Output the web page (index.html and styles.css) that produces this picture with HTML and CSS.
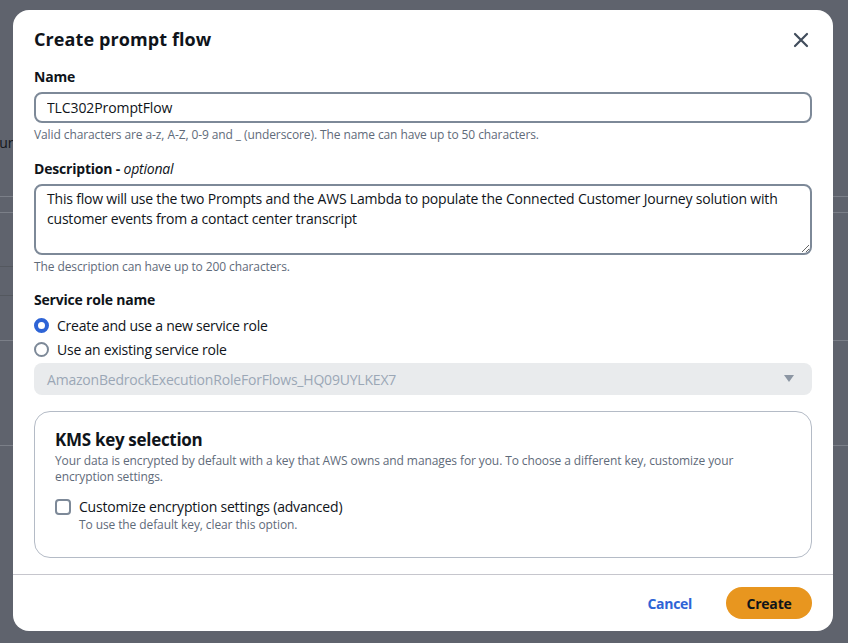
FILE: index.html
```html
<!DOCTYPE html>
<html>
<head>
<meta charset="utf-8">
<link rel="stylesheet" href="styles.css">
</head>
<body>
<div class="backdrop">
  <div class="bg-text">Your</div>
  <div class="bg-row bg-r1"></div>
  <div class="bg-row bg-r2"></div>
  <div class="bg-row bg-r3 bg-short"></div>
  <div class="bg-row bg-r4 bg-short"></div>
  <div class="bg-row bg-r5"></div>
  <div class="bg-row bg-r6"></div>
</div>
<div class="modal">
  <div class="modal-header">
    <h2 class="modal-title">Create prompt flow</h2>
    <button class="close" aria-label="Close">
      <svg width="16" height="16" viewBox="0 0 16 16"><path d="M2 2 L14 14 M14 2 L2 14" stroke="#414d5c" stroke-width="2.2" fill="none" stroke-linecap="round"/></svg>
    </button>
  </div>
  <div class="modal-body">
    <div class="field">
      <label class="label">Name</label>
      <input class="input" type="text" value="TLC302PromptFlow">
      <div class="hint">Valid characters are a-z, A-Z, 0-9 and _ (underscore). The name can have up to 50 characters.</div>
    </div>
    <div class="field field-gap">
      <label class="label">Description - <i class="optional">optional</i></label>
      <textarea class="textarea">This flow will use the two Prompts and the AWS Lambda to populate the Connected Customer Journey solution with customer events from a contact center transcript</textarea>
      <div class="hint hint-ta">The description can have up to 200 characters.</div>
    </div>
    <div class="field field-gap2">
      <label class="label">Service role name</label>
      <div class="radios">
        <div class="radio-row"><span class="radio radio-on"></span><span>Create and use a new service role</span></div>
        <div class="radio-row"><span class="radio"></span><span>Use an existing service role</span></div>
      </div>
      <div class="select">
        <span>AmazonBedrockExecutionRoleForFlows_HQ09UYLKEX7</span>
        <svg width="12" height="10" viewBox="0 0 12 10"><path d="M1 1 H11 L6 8 Z" fill="#8c96a3"/></svg>
      </div>
    </div>
    <div class="kms">
      <h3 class="kms-title">KMS key selection</h3>
      <p class="kms-desc">Your data is encrypted by default with a key that AWS owns and manages for you. To choose a different key, customize your<br>encryption settings.</p>
      <div class="check-row">
        <span class="checkbox"></span>
        <div>
          <div class="check-label">Customize encryption settings (advanced)</div>
          <div class="check-hint">To use the default key, clear this option.</div>
        </div>
      </div>
    </div>
  </div>
  <div class="modal-footer">
    <a class="cancel">Cancel</a>
    <button class="create">Create</button>
  </div>
</div>
</body>
</html>
```
FILE: styles.css
```css
* { box-sizing: border-box; }
html, body { margin: 0; padding: 0; }
body {
  width: 848px;
  height: 643px;
  overflow: hidden;
  background: #5f636d;
  font-family: "Open Sans", "Noto Sans", sans-serif;
  color: #0f141a;
  position: relative;
}
.backdrop { position: relative; height: 643px; }
.bg-text {
  position: absolute; left: -17px; top: 133px;
  font-size: 14px; color: #14171c;
}
.bg-row { position: absolute; left: 0; right: 0; height: 1px; background: #7b7f88; }
.bg-short { right: auto; width: 13px; }
.bg-r1 { top: 196px; }
.bg-r2 { top: 212px; }
.bg-r3 { top: 266px; background: #54585f; }
.bg-r4 { top: 295px; background: #54585f; }
.bg-r5 { top: 340px; }
.bg-r6 { top: 445px; }

.modal {
  position: absolute;
  left: 13px; top: 10px;
  width: 820px; height: 621px;
  background: #fff;
  border-radius: 16px;
  display: flex; flex-direction: column;
}
.modal-header {
  display: flex; align-items: center; justify-content: space-between;
  padding: 18px 24px 0 21px;
}
.modal-title {
  margin: 0; font-size: 18px; line-height: 22px; font-weight: 700; letter-spacing: 0.1px;
}
.close {
  border: 0; background: none; padding: 0; width: 16px; height: 16px; display: flex; margin-top: 1px;
}
.modal-body { padding: 18px 21px 0 21px; flex: 1; letter-spacing: -0.2px; }
.field { display: flex; flex-direction: column; }
.field-gap { margin-top: 17px; }
.field-gap2 { margin-top: 16px; }
.label { font-size: 14px; line-height: 18px; font-weight: 700; }
.optional { font-weight: 400; }
.input {
  margin-top: 6px;
  height: 31px;
  border: 2px solid #7d8998;
  border-radius: 8px;
  padding: 0 11px;
  font-family: "Open Sans", sans-serif;
  font-size: 14px;
  letter-spacing: -0.1px;
  color: #0f141a;
  outline: none;
}
.hint { font-size: 12px; line-height: 16px; color: #5f6b7a; margin-top: 4px; letter-spacing: -0.1px; }
.hint-ta { margin-top: 4px; }
.textarea {
  margin-top: 6px;
  height: 71px;
  border: 2px solid #7d8998;
  border-radius: 8px;
  padding: 3px 11px;
  font-family: "Open Sans", sans-serif;
  font-size: 14px;
  line-height: 20px;
  letter-spacing: -0.2px;
  color: #0f141a;
  resize: vertical;
  outline: none;
}
.radios { margin-top: 4px; display: flex; flex-direction: column; }
.radio-row { display: flex; align-items: center; gap: 8px; height: 24px; font-size: 14px; letter-spacing: -0.25px; }
.radio {
  width: 15px; height: 15px; border-radius: 50%;
  border: 2px solid #7d8998; flex: none;
}
.radio-on { border: 4.5px solid #2e64d6; background: #fff; }
.select {
  margin-top: 2px;
  height: 32px;
  background: #e9ebed;
  border-radius: 8px;
  display: flex; align-items: center; justify-content: space-between;
  padding: 0 17px 0 13px;
  font-size: 14px; color: #9ba7b6;
}
.kms {
  margin-top: 16px;
  border: 1px solid #b4bbc6;
  border-radius: 16px;
  padding: 17px 20px 24px 20px;
}
.kms-title { margin: 0; font-size: 17px; line-height: 22px; font-weight: 700; letter-spacing: -0.3px; }
.kms-desc { margin: 2px 0 0 0; font-size: 12px; line-height: 16px; color: #5f6b7a; letter-spacing: -0.1px; }
.check-row { display: flex; gap: 8px; margin-top: 12px; }
.checkbox {
  width: 16px; height: 16px; border: 2px solid #7d8998; border-radius: 4px; margin-top: 2px; flex: none;
}
.check-label { font-size: 14px; line-height: 20px; }
.check-hint { font-size: 12px; line-height: 16px; color: #5f6b7a; margin-top: 0; letter-spacing: -0.1px; }
.modal-footer {
  border-top: 1px solid #c6c6cd;
  height: 57px;
  display: flex; align-items: center; justify-content: flex-end;
  padding: 0 21px 0 0;
  gap: 34px;
}
.cancel { font-size: 14px; font-weight: 700; color: #2e64d6; letter-spacing: -0.3px; }
.create {
  width: 86px; height: 32px;
  border: 0; border-radius: 16px;
  background: #e8961f;
  font-family: "Open Sans", sans-serif;
  font-size: 14px; font-weight: 700; color: #0f141a; letter-spacing: -0.2px;
}
```
